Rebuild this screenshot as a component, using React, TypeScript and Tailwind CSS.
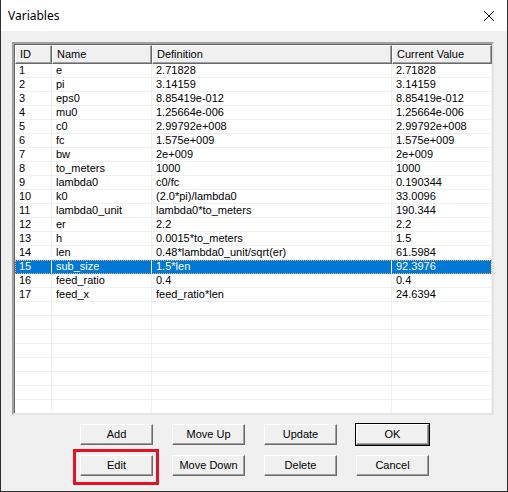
import React from 'react';

type Row = { id: number; name: string; def: string; value: string };

const rows: Row[] = [
  { id: 1, name: 'e', def: '2.71828', value: '2.71828' },
  { id: 2, name: 'pi', def: '3.14159', value: '3.14159' },
  { id: 3, name: 'eps0', def: '8.85419e-012', value: '8.85419e-012' },
  { id: 4, name: 'mu0', def: '1.25664e-006', value: '1.25664e-006' },
  { id: 5, name: 'c0', def: '2.99792e+008', value: '2.99792e+008' },
  { id: 6, name: 'fc', def: '1.575e+009', value: '1.575e+009' },
  { id: 7, name: 'bw', def: '2e+009', value: '2e+009' },
  { id: 8, name: 'to_meters', def: '1000', value: '1000' },
  { id: 9, name: 'lambda0', def: 'c0/fc', value: '0.190344' },
  { id: 10, name: 'k0', def: '(2.0*pi)/lambda0', value: '33.0096' },
  { id: 11, name: 'lambda0_unit', def: 'lambda0*to_meters', value: '190.344' },
  { id: 12, name: 'er', def: '2.2', value: '2.2' },
  { id: 13, name: 'h', def: '0.0015*to_meters', value: '1.5' },
  { id: 14, name: 'len', def: '0.48*lambda0_unit/sqrt(er)', value: '61.5984' },
  { id: 15, name: 'sub_size', def: '1.5*len', value: '92.3976' },
  { id: 16, name: 'feed_ratio', def: '0.4', value: '0.4' },
  { id: 17, name: 'feed_x', def: 'feed_ratio*len', value: '24.6394' },
];

const SELECTED = 15;
const TOTAL_ROWS = 25;

const cols = ['w-[37px]', 'w-[100px]', 'w-[240px]', 'w-[100px]'];

const Button: React.FC<{ label: string; isDefault?: boolean }> = ({ label, isDefault }) => (
  <div className={`h-[23px] w-[75px] ${isDefault ? 'border border-black' : 'border border-transparent'}`}>
    <div className="h-full w-full flex items-center justify-center bg-[#f0f0f0] border border-t-white border-l-white border-r-[#696969] border-b-[#696969] shadow-[inset_-1px_-1px_0_#a0a0a0] text-[11px] text-black">
      {label}
    </div>
  </div>
);

export default function App() {
  const list = Array.from({ length: TOTAL_ROWS }, (_, i) => rows[i]);

  return (
    <div
      className="w-[508px] h-[492px] bg-[#f0f0f0] border-x border-b border-[#2f2f2f] flex flex-col overflow-hidden"
      style={{ fontFamily: '"Liberation Sans", Arial, sans-serif' }}
    >
      {/* title bar */}
      <div className="h-[31px] bg-white flex items-center justify-between pl-[7px] pr-[12px] shrink-0">
        <span className="text-[12px] text-black" style={{ fontFamily: '"Noto Sans", "Open Sans", sans-serif' }}>
          Variables
        </span>
        <svg width="12" height="12" viewBox="0 0 12 12">
          <path d="M1 1 L11 11 M11 1 L1 11" stroke="#111" strokeWidth="1" fill="none" />
        </svg>
      </div>

      <div className="pt-[11px] pl-[11px]">
        {/* list box */}
        <div className="w-[482px] h-[373px] bg-white border-2 border-t-[#a0a0a0] border-l-[#a0a0a0] border-r-[#e3e3e3] border-b-[#e3e3e3] overflow-hidden">
          <div className="h-full border-t border-l border-t-[#696969] border-l-[#696969]">
            {/* header */}
            <div className="flex h-[19px]">
              {['ID', 'Name', 'Definition', 'Current Value'].map((h, i) => (
                <div
                  key={h}
                  className={`${cols[i]} h-full bg-[#f0f0f0] border border-t-white border-l-white border-r-[#696969] border-b-[#696969] shadow-[inset_-1px_-1px_0_#a0a0a0] flex items-center pl-[4px] text-[11px] text-black`}
                >
                  {h}
                </div>
              ))}
            </div>
            {/* rows */}
            {list.map((r, idx) => {
              const sel = r && r.id === SELECTED;
              return (
                <div
                  key={idx}
                  className={`flex h-[14px] ${sel ? 'bg-[#0078d7] text-white outline outline-1 outline-dotted outline-offset-[-1px] outline-[#f5b060]' : 'text-black'}`}
                >
                  {[r?.id, r?.name, r?.def, r?.value].map((v, i) => (
                    <div
                      key={i}
                      className={`${cols[i]} h-full border-b border-r ${sel ? 'border-[#0078d7] border-r-white' : 'border-[#f0f0f0]'} pl-[4px] text-[11px] leading-[13px] whitespace-nowrap overflow-hidden`}
                    >
                      {v ?? ''}
                    </div>
                  ))}
                </div>
              );
            })}
          </div>
        </div>

        {/* buttons */}
        <div className="relative mt-[8px] ml-[67px] grid grid-cols-[75px_75px_75px_75px] gap-x-[17px] gap-y-[8px] w-max">
          <Button label="Add" />
          <Button label="Move Up" />
          <Button label="Update" />
          <Button label="OK" isDefault />
          <Button label="Edit" />
          <Button label="Move Down" />
          <Button label="Delete" />
          <Button label="Cancel" />
          <div className="absolute left-[-6px] top-[26px] w-[86px] h-[36px] border-[3px] border-[#e81123]" />
        </div>
      </div>
    </div>
  );
}
